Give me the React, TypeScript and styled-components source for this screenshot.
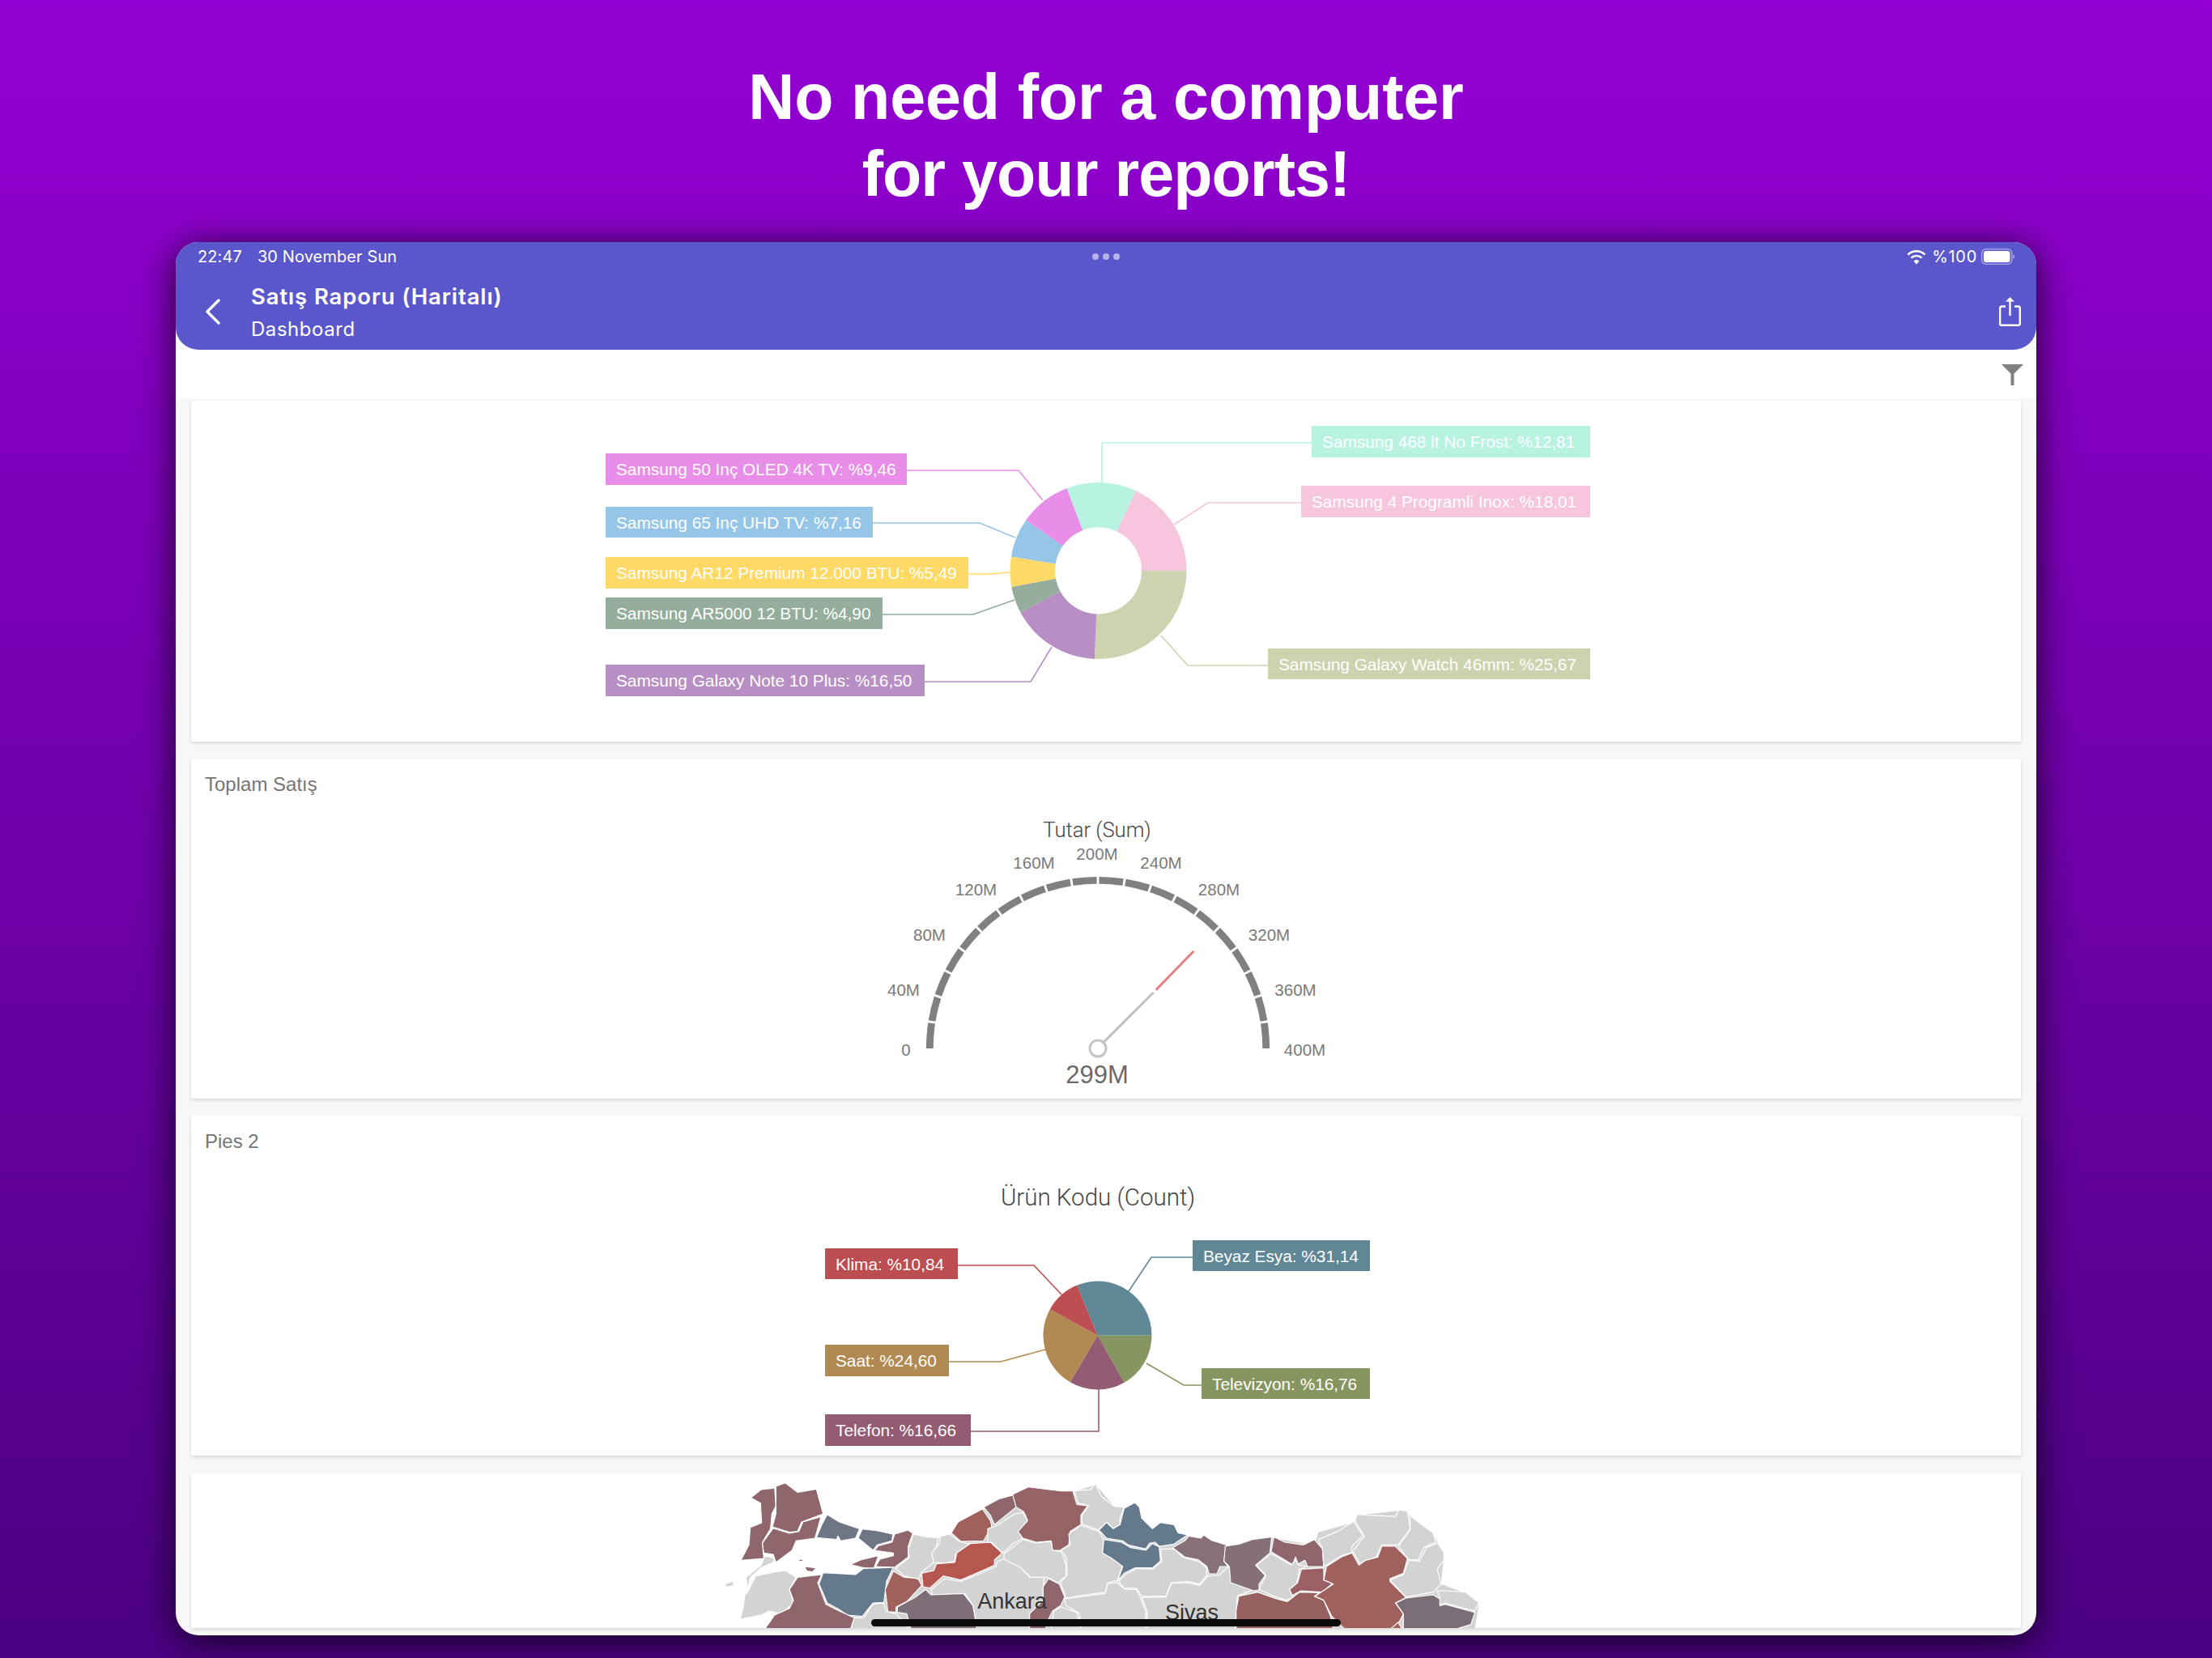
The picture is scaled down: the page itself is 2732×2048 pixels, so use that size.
import React from "react";
import styled, { createGlobalStyle } from "styled-components";

type Slice = {
  value: number;
  color: string;
};

type Callout = {
  text: string;
  color: string;
  x: number;
  y: number;
  width: number;
  height: number;
  line: string;
};

type Region = {
  fill: string;
  points: string;
};

const GlobalStyle = createGlobalStyle`
  html, body {
    margin: 0;
    padding: 0;
  }

  body {
    width: 2732px;
    height: 2048px;
    overflow: hidden;
    background: #4b0082;
  }
`;

const Page = styled.div`
  width: 2732px;
  height: 2048px;
  padding-top: 72px;
  box-sizing: border-box;
  display: flex;
  flex-direction: column;
  align-items: center;
  background: linear-gradient(180deg, #9400d3 0%, #4b0082 100%);
`;

const Headline = styled.h1`
  margin: 0 0 37px;
  font-family: "Liberation Sans", Arial, sans-serif;
  font-size: 79px;
  line-height: 95px;
  font-weight: 700;
  color: #fff;
  text-align: center;
`;

const HeadlineLine = styled.span<{ $tracking: number }>`
  display: block;
  letter-spacing: ${props => props.$tracking}px;
`;

const Tablet = styled.div`
  position: relative;
  width: 2298px;
  height: 1721px;
  border-radius: 28px;
  overflow: hidden;
  background: #f7f7f7;
  box-shadow: 0 6px 44px rgba(0, 0, 0, 0.8);
`;

const AppHeader = styled.header`
  height: 133px;
  box-sizing: border-box;
  padding: 0 19px 0 27px;
  background: #5a57cc;
  border-radius: 0 0 28px 28px;
  color: #fff;
  font-family: Inter, "Noto Sans", sans-serif;
`;

const StatusRow = styled.div`
  height: 36px;
  margin-right: 8px;
  display: grid;
  grid-template-columns: 1fr auto 1fr;
  align-items: center;
  font-size: 20px;
`;

const StatusLeft = styled.div`
  display: flex;
  gap: 19px;
  letter-spacing: 0.1px;
`;

const StatusRight = styled.div`
  display: flex;
  justify-content: flex-end;
  align-items: center;
  gap: 7px;
`;

const BatteryText = styled.span`
  letter-spacing: 0.7px;
  margin-right: -2px;
`;

const Dots = styled.div`
  display: flex;
  gap: 5px;
`;

const Dot = styled.span`
  width: 8px;
  height: 8px;
  border-radius: 50%;
  background: #b5b3ea;
`;

const NavRow = styled.div`
  display: flex;
  align-items: center;
  height: 85px;
  padding-top: 14px;
  box-sizing: border-box;
`;

const BackButton = styled.div`
  width: 57px;
  margin-left: 9px;
  display: flex;
  align-items: center;
`;

const NavTitles = styled.div`
  flex: 1;
  display: flex;
  flex-direction: column;
  gap: 12px;
  padding-top: 3px;
`;

const NavTitle = styled.div`
  font-size: 27.5px;
  line-height: 30px;
  font-weight: 600;
  letter-spacing: 0.88px;
`;

const NavSubtitle = styled.div`
  font-size: 24px;
  line-height: 28px;
  letter-spacing: 0.55px;
`;

const FilterBar = styled.div`
  height: 61px;
  box-sizing: border-box;
  padding: 18px 16px 0 0;
  display: flex;
  justify-content: flex-end;
  align-items: flex-start;
  background: #fff;
`;

const Content = styled.div`
  padding: 2px 19px 0;
  display: flex;
  flex-direction: column;
  gap: 21px;
`;

const Card = styled.section<{ $height: number }>`
  height: ${props => props.$height}px;
  display: flex;
  flex-direction: column;
  background: #fff;
  border-radius: 2px;
  overflow: hidden;
  box-shadow: 0 2px 4px rgba(0, 0, 0, 0.13);
`;

const CardTitle = styled.div`
  height: 53px;
  flex: none;
  box-sizing: border-box;
  padding: 13px 0 0 17px;
  font-family: "Liberation Sans", Arial, sans-serif;
  font-size: 24px;
  line-height: 38px;
  color: #757575;
`;

const ChartSvg = styled.svg`
  display: block;
  width: 2260px;
  flex: 1;
  min-height: 0;
`;

const CalloutText = styled.text`
  font-family: "Liberation Sans", Arial, sans-serif;
  font-size: 20.8px;
  fill: #fff;
  dominant-baseline: middle;
`;

const ChartTitle = styled.text<{ $size: number }>`
  font-family: Roboto, "Liberation Sans", sans-serif;
  font-weight: 300;
  font-size: ${props => props.$size}px;
  fill: #444;
  text-anchor: middle;
  dominant-baseline: middle;
`;

const TickLabel = styled.text`
  font-family: "Liberation Sans", Arial, sans-serif;
  font-size: 20.5px;
  fill: #7a7a7a;
  text-anchor: middle;
  dominant-baseline: middle;
`;

const GaugeValue = styled.text`
  font-family: "Liberation Sans", Arial, sans-serif;
  font-size: 31px;
  fill: #6a6a6a;
  text-anchor: middle;
  dominant-baseline: middle;
`;

const MapLabel = styled.text`
  font-family: "Liberation Sans", Arial, sans-serif;
  font-size: 27px;
  fill: #333;
  text-anchor: middle;
`;

const HomeBar = styled.div`
  position: absolute;
  left: 859px;
  bottom: 11px;
  width: 580px;
  height: 9px;
  border-radius: 5px;
  background: #0a0a0a;
`;

const polar = (cx: number, cy: number, r: number, deg: number) => {
  const rad = (deg * Math.PI) / 180;
  return [cx + r * Math.cos(rad), cy + r * Math.sin(rad)];
};

const slicePath = (cx: number, cy: number, r: number, inner: number, from: number, to: number) => {
  const [x1, y1] = polar(cx, cy, r, from);
  const [x2, y2] = polar(cx, cy, r, to);
  const large = to - from > 180 ? 1 : 0;
  if (inner === 0) {
    return `M${cx},${cy} L${x1},${y1} A${r},${r} 0 ${large} 1 ${x2},${y2} Z`;
  }
  const [x3, y3] = polar(cx, cy, inner, to);
  const [x4, y4] = polar(cx, cy, inner, from);
  return `M${x1},${y1} A${r},${r} 0 ${large} 1 ${x2},${y2} L${x3},${y3} A${inner},${inner} 0 ${large} 0 ${x4},${y4} Z`;
};

const Pie: React.FC<{ cx: number; cy: number; r: number; inner: number; slices: Slice[] }> = props => {
  let angle = 0;
  return (
    <>
      {props.slices.map(slice => {
        const from = angle;
        angle += slice.value * 3.6;
        return (
          <path
            key={slice.color}
            d={slicePath(props.cx, props.cy, props.r, props.inner, from, angle)}
            fill={slice.color}
          />
        );
      })}
    </>
  );
};

const Callouts: React.FC<{ items: Callout[] }> = props => (
  <>
    {props.items.map(item => (
      <g key={item.text}>
        <polyline points={item.line} fill="none" stroke={item.color} strokeWidth={1.6} />
        <rect x={item.x} y={item.y} width={item.width} height={item.height} fill={item.color} />
        <CalloutText x={item.x + 13} y={item.y + item.height / 2 + 2}>{item.text}</CalloutText>
      </g>
    ))}
  </>
);

const donutSlices: Slice[] = [
  { value: 25.67, color: "#cdd3ae" },
  { value: 16.5, color: "#b88fc5" },
  { value: 4.9, color: "#94ad9c" },
  { value: 5.49, color: "#ffd966" },
  { value: 7.16, color: "#95c6e8" },
  { value: 9.46, color: "#e88ee8" },
  { value: 12.81, color: "#b8f3e2" },
  { value: 18.01, color: "#f5c6de" },
];

const donutCallouts: Callout[] = [
  { text: "Samsung 50 Inç OLED 4K TV: %9,46", color: "#e88ee8", x: 748, y: 560, width: 372, height: 39, line: "1120,581 1258,581 1288,618" },
  { text: "Samsung 65 Inç UHD TV: %7,16", color: "#95c6e8", x: 748, y: 626, width: 330, height: 38, line: "1078,646 1210,646 1254,664" },
  { text: "Samsung AR12 Premium 12.000 BTU: %5,49", color: "#ffd966", x: 748, y: 688, width: 448, height: 39, line: "1196,709 1222,709 1247,707" },
  { text: "Samsung AR5000 12 BTU: %4,90", color: "#94ad9c", x: 748, y: 738, width: 342, height: 39, line: "1090,759 1202,759 1253,741" },
  { text: "Samsung Galaxy Note 10 Plus: %16,50", color: "#b88fc5", x: 748, y: 821, width: 394, height: 39, line: "1142,842 1273,842 1299,799" },
  { text: "Samsung 468 lt No Frost: %12,81", color: "#b8f3e2", x: 1620, y: 526, width: 344, height: 39, line: "1620,547 1361,547 1361,596" },
  { text: "Samsung 4 Programli Inox: %18,01", color: "#f5c6de", x: 1607, y: 600, width: 357, height: 39, line: "1607,621 1492,621 1450,648" },
  { text: "Samsung Galaxy Watch 46mm: %25,67", color: "#cdd3ae", x: 1566, y: 801, width: 398, height: 38, line: "1566,822 1467,822 1434,785" },
];

const pieSlices: Slice[] = [
  { value: 16.76, color: "#879661" },
  { value: 16.66, color: "#935c72" },
  { value: 24.6, color: "#b08a52" },
  { value: 10.84, color: "#bc4d50" },
  { value: 31.14, color: "#5f8796" },
];

const pieCallouts: Callout[] = [
  { text: "Klima: %10,84", color: "#bc4d50", x: 1019, y: 1542, width: 164, height: 38, line: "1183,1563 1277,1563 1311,1599" },
  { text: "Saat: %24,60", color: "#b08a52", x: 1019, y: 1661, width: 153, height: 39, line: "1172,1682 1236,1682 1291,1667" },
  { text: "Telefon: %16,66", color: "#935c72", x: 1019, y: 1747, width: 180, height: 39, line: "1199,1768 1357,1768 1357,1716" },
  { text: "Beyaz Esya: %31,14", color: "#5f8796", x: 1473, y: 1532, width: 219, height: 38, line: "1473,1553 1422,1553 1394,1595" },
  { text: "Televizyon: %16,76", color: "#879661", x: 1484, y: 1690, width: 208, height: 38, line: "1484,1711 1462,1711 1416,1684" },
];

const gaugeTicks = [
  { text: "0", x: 1119, y: 1299 },
  { text: "40M", x: 1116, y: 1225 },
  { text: "80M", x: 1148, y: 1157 },
  { text: "120M", x: 1205.5, y: 1101 },
  { text: "160M", x: 1277, y: 1068 },
  { text: "200M", x: 1355, y: 1057 },
  { text: "240M", x: 1434, y: 1068 },
  { text: "280M", x: 1505.5, y: 1101 },
  { text: "320M", x: 1567.5, y: 1157 },
  { text: "360M", x: 1600, y: 1225 },
  { text: "400M", x: 1611.5, y: 1299 },
];

const gaugeSegments = Array.from({ length: 20 }, (_, i) => {
  const from = 180 + i * 9 + (i === 0 ? 0 : 0.4);
  const to = 180 + (i + 1) * 9 - (i === 19 ? 0 : 0.4);
  const [x1, y1] = polar(1356, 1295, 207.7, from);
  const [x2, y2] = polar(1356, 1295, 207.7, to);
  return `M${x1},${y1} A207.7,207.7 0 0 1 ${x2},${y2}`;
});

const GREY = "#d3d3d3";
const MAUVE = "#8e666b";
const SLATE = "#6e7585";
const BLUE = "#65798c";
const RED = "#a0605c";
const BRIGHT = "#b5574e";
const PLUM = "#7e6e78";
const ROSE = "#956366";

// land behind the provinces so the thin gaps between them don't read as sea
const landBase: Region[] = [
  {
    fill: GREY,
    points:
      "640,348 648,228 712,224 805,240 850,228 880,185 970,135 1085,84 1140,55 1305,68 1390,42 1460,124 1495,128 1535,112 1560,168 1600,208 1630,186 1695,222 1730,231 1790,243 1875,268 1920,265 1970,248 2042,238 2200,268 2215,218 2345,182 2360,155 2515,138 2555,158 2640,223 2680,298 2670,410 2760,443 2810,483 2795,575 365,575 365,400 380,372 500,375 530,352",
  },
];

// west part of the map, in crop coordinates (origin 890,1820, 3x)
const westRegions: Region[] = [
  { fill: GREY, points: "90,450 100,440 130,380 200,365 240,360 280,385 255,430 270,480 225,520 180,510 150,525 72,540 85,490" },
  { fill: GREY, points: "165,305 200,315 195,330 150,350 110,385 100,430 95,385 150,340" },
  { fill: GREY, points: "15,410 45,400 50,415 20,422" },
  { fill: GREY, points: "490,535 530,535 565,485 605,480 612,510 650,520 700,575 485,575" },
  { fill: GREY, points: "780,430 830,390 890,400 960,372 1020,345 1025,325 1050,318 1100,330 1145,385 1200,372 1195,430 1195,470 1145,520 1150,575 950,575 935,490 905,445 785,450" },
  { fill: MAUVE, points: "112,90 150,60 195,55 200,52 205,120 190,150 185,205 155,255 160,315 75,322 105,265 110,200 152,183 148,110" },
  { fill: MAUVE, points: "205,48 240,35 285,70 355,58 380,150 300,180 285,215 255,218 192,198 205,150" },
  { fill: MAUVE, points: "195,203 255,222 290,215 305,180 372,160 350,240 280,250 265,285 205,330 195,300 160,295 155,258" },
  { fill: SLATE, points: "395,152 440,180 515,205 500,240 445,250 435,232 430,245 355,238 375,190" },
  { fill: SLATE, points: "525,206 580,212 638,225 635,250 580,265 565,285 510,240" },
  { fill: MAUVE, points: "645,225 695,210 712,222 695,270 695,310 645,348 575,345 590,318 640,305 640,295 570,285 585,268 635,255" },
  { fill: MAUVE, points: "480,338 520,320 585,305 568,352 530,350" },
  { fill: BLUE, points: "380,368 450,372 500,375 530,352 600,350 640,348 615,400 605,478 565,480 525,530 470,525 440,505 395,480 365,410" },
  { fill: RED, points: "640,362 680,385 730,388 745,415 690,475 650,495 650,515 620,512 610,430" },
  { fill: PLUM, points: "655,495 720,460 760,430 780,450 900,445 935,490 950,575 705,575 690,520 655,515" },
  { fill: MAUVE, points: "285,385 375,375 360,405 390,485 440,510 495,535 482,575 165,575 200,525 255,500 270,470 255,430" },
  { fill: MAUVE, points: "310,345 355,350 340,365 320,362" },
  { fill: MAUVE, points: "290,320 305,318 305,326 290,326" },
  { fill: GREY, points: "715,225 760,235 805,238 800,270 785,295 790,330 745,365 735,392 680,380 648,352 700,312 695,285" },
  { fill: GREY, points: "815,232 850,225 885,252 925,262 870,300 868,325 830,332 790,330 782,295 808,265" },
  { fill: RED, points: "855,220 880,180 970,132 1000,175 1005,195 975,250 890,252" },
  { fill: MAUVE, points: "975,125 1030,95 1085,80 1095,125 1015,190 1000,155" },
  { fill: BRIGHT, points: "745,370 790,360 800,335 868,330 875,295 925,260 1000,255 1043,295 1015,320 1015,340 960,365 890,395 825,380 775,425 750,420" },
];

// middle part of the map (origin 1220,1820, 3x)
const midRegions: Region[] = [
  { fill: GREY, points: "0,205 30,195 100,150 130,145 148,175 115,215 130,240 90,262 60,292 50,290 15,255 0,255" },
  { fill: ROSE, points: "92,78 150,50 270,65 315,65 330,115 370,120 345,155 345,190 305,215 300,265 268,285 240,285 235,250 180,255 130,240 112,215 148,175 133,142 105,125" },
  { fill: GREY, points: "320,65 380,60 400,38 420,85 470,122 505,125 490,165 490,190 465,205 440,180 412,210 350,188 348,155 375,120 335,110" },
  { fill: GREY, points: "60,298 130,245 175,258 235,252 240,285 272,290 290,340 290,380 260,405 220,385 160,385 115,345 60,318" },
  { fill: GREY, points: "300,225 345,192 410,215 430,245 425,295 460,315 500,340 480,398 445,405 435,440 360,450 290,462 270,405 295,375 290,310 272,285 305,265" },
  { fill: BLUE, points: "545,108 562,125 570,165 610,205 640,182 690,190 705,220 740,228 690,262 635,270 620,255 600,258 585,280 520,265 500,250 440,240 412,210 440,182 465,205 490,190 505,130" },
  { fill: BLUE, points: "430,245 495,255 530,275 585,285 610,260 635,272 640,325 610,350 545,350 505,370 482,398 500,345 460,315 425,295" },
  { fill: "#87707a", points: "745,232 790,240 800,228 830,248 885,265 875,325 890,345 860,345 850,372 820,372 812,345 780,320 730,310 685,275 730,250" },
  { fill: GREY, points: "640,280 690,280 725,312 780,325 810,350 812,378 785,410 740,400 680,405 660,455 570,455 550,425 505,425 485,400 510,375 550,352 610,355 645,325" },
  { fill: GREY, points: "570,460 660,458 680,408 740,405 785,415 815,380 855,378 893,345 905,395 960,410 1000,425 960,440 925,455 915,575 590,575 590,510" },
  { fill: GREY, points: "285,465 360,455 435,445 445,408 480,405 510,430 550,430 565,460 585,510 585,575 345,575 340,520 290,490" },
  { fill: GREY, points: "245,510 270,495 330,515 345,575 235,575" },
  { fill: MAUVE, points: "225,390 265,410 285,458 270,490 240,510 225,540 215,575 155,575 155,520 205,470 205,420" },
];

// east part of the map (origin 1520,1820, 3x)
const eastRegions: Region[] = [
  { fill: "#85707a", points: "-20,270 30,262 80,245 152,235 145,295 92,340 128,378 105,410 105,432 85,435 0,405 -5,345 -25,325" },
  { fill: MAUVE, points: "160,235 200,255 270,265 310,245 340,280 345,345 285,345 275,322 250,335 240,310 230,338 150,290" },
  { fill: GREY, points: "95,340 150,297 225,340 240,320 250,338 280,345 255,355 245,410 220,432 230,460 205,470 160,455 105,430 130,378" },
  { fill: "#9b6065", points: "262,355 345,350 345,395 380,405 340,440 260,435 228,452 218,430 248,405" },
  { fill: "#96605f", points: "30,455 100,440 170,465 210,475 255,440 330,442 310,455 345,470 370,530 380,575 20,575 20,510" },
  { fill: GREY, points: "325,245 395,215 455,178 490,230 450,270 445,295 410,305 345,345 340,280" },
  { fill: GREY, points: "460,175 470,152 520,155 610,160 625,135 655,140 665,205 620,265 560,265 540,310 480,335 452,290 495,232" },
  { fill: GREY, points: "665,155 700,185 750,220 760,255 715,275 695,320 660,320 622,270 665,210" },
  { fill: GREY, points: "700,325 725,275 768,258 790,295 790,320 765,355 780,410 750,440 650,458 590,395 640,375 660,322" },
  { fill: GREY, points: "765,435 800,435 870,440 920,480 905,508 860,498 795,480 770,490 775,460" },
  { fill: RED, points: "450,295 475,340 500,322 545,310 560,270 610,270 655,315 640,370 590,390 590,400 650,460 610,480 640,520 625,550 595,575 420,575 375,530 345,470 312,455 380,410 345,395 355,345 410,310" },
  { fill: "#7a6d78", points: "612,480 650,462 750,450 775,465 775,490 795,485 905,515 890,560 840,575 640,575 640,520" },
  { fill: RED, points: "595,575 620,552 635,575" },
];

const MapPart: React.FC<{ originX: number; regions: Region[]; outline?: boolean }> = props => (
  <g transform={`translate(${props.originX} 1820) scale(0.3333)`}>
    {props.regions.map(region => (
      <polygon
        key={region.points}
        points={region.points}
        fill={region.fill}
        stroke={props.outline ? "#fff" : "none"}
        strokeWidth={3.5}
        strokeLinejoin="round"
      />
    ))}
  </g>
);

const App: React.FC = () => {
  return (
    <Page>
      <GlobalStyle />
      <Headline>
        <HeadlineLine $tracking={-0.15}>No need for a computer</HeadlineLine>
        <HeadlineLine $tracking={-0.95}>for your reports!</HeadlineLine>
      </Headline>

      <Tablet>
        <AppHeader>
          <StatusRow>
            <StatusLeft>
              <span>22:47</span>
              <span>30 November Sun</span>
            </StatusLeft>
            <Dots>
              <Dot />
              <Dot />
              <Dot />
            </Dots>
            <StatusRight>
              <svg width="24" height="19" viewBox="0 0 24 19" fill="none" stroke="#fff" strokeWidth="2.6">
                <path d="M1.5 6.5 A15 15 0 0 1 22.5 6.5" />
                <path d="M5.5 10.5 A9.5 9.5 0 0 1 18.5 10.5" />
                <path d="M12 18.5 L8.6 14.4 A5 5 0 0 1 15.4 14.4 Z" fill="#fff" stroke="none" />
              </svg>
              <BatteryText>%100</BatteryText>
              <svg width="41" height="20" viewBox="0 0 41 20">
                <rect x="0.75" y="0.75" width="37" height="18.5" rx="5" fill="none" stroke="#fff" strokeOpacity="0.45" strokeWidth="1.5" />
                <rect x="3" y="3" width="32.5" height="14" rx="3" fill="#fff" />
                <path d="M39.5 7 A3.5 3.5 0 0 1 39.5 13 Z" fill="#fff" fillOpacity="0.5" />
              </svg>
            </StatusRight>
          </StatusRow>
          <NavRow>
            <BackButton>
              <svg width="20" height="32" viewBox="0 0 20 32" fill="none" stroke="#fff" strokeWidth="3.4" strokeLinecap="round" strokeLinejoin="round">
                <path d="M17 2 L3 16 L17 30" />
              </svg>
            </BackButton>
            <NavTitles>
              <NavTitle>Satış Raporu (Haritalı)</NavTitle>
              <NavSubtitle>Dashboard</NavSubtitle>
            </NavTitles>
            <svg width="27" height="37" viewBox="0 0 27 37" fill="none" stroke="#fff" strokeWidth="2.4" strokeLinejoin="round">
              <path d="M8 12.5 H3 A1.8 1.8 0 0 0 1.2 14.3 V34 A1.8 1.8 0 0 0 3 35.8 H24 A1.8 1.8 0 0 0 25.8 34 V14.3 A1.8 1.8 0 0 0 24 12.5 H19" />
              <path d="M13.5 24 V2" />
              <path d="M8 6.5 L13.5 1 L19 6.5" fill="#fff" stroke="none" />
            </svg>
          </NavRow>
        </AppHeader>

        <FilterBar>
          <svg width="27" height="26" viewBox="0 0 27 26" fill="#808080">
            <path d="M0 0 H27 L15.5 11.5 V26 H11.5 V11.5 Z" />
          </svg>
        </FilterBar>

        <Content>
          <Card $height={421}>
            <ChartSvg viewBox="236 495 2260 421">
              <Callouts items={donutCallouts} />
              <Pie cx={1356.5} cy={705} r={109} inner={53.5} slices={donutSlices} />
            </ChartSvg>
          </Card>

          <Card $height={420}>
            <CardTitle>Toplam Satış</CardTitle>
            <ChartSvg viewBox="236 990 2260 367">
              <ChartTitle $size={25.6} x={1355} y={1027.5}>Tutar (Sum)</ChartTitle>
              {gaugeTicks.map(tick => (
                <TickLabel key={tick.text} x={tick.x} y={tick.y}>{tick.text}</TickLabel>
              ))}
              {gaugeSegments.map(d => (
                <path key={d} d={d} fill="none" stroke="#808080" strokeWidth={8.8} />
              ))}
              <line x1={1362.5} y1={1288} x2={1424.6} y2={1226} stroke="#bfbfbf" strokeWidth={3} />
              <line x1={1427.7} y1={1222.7} x2={1474.4} y2={1174.7} stroke="#e57f7f" strokeWidth={3} />
              <circle cx={1356} cy={1295} r={10} fill="#fff" stroke="#c4c4c4" strokeWidth={3} />
              <GaugeValue x={1355} y={1329.5}>299M</GaugeValue>
            </ChartSvg>
          </Card>

          <Card $height={420}>
            <CardTitle>Pies 2</CardTitle>
            <ChartSvg viewBox="236 1431 2260 367">
              <ChartTitle $size={29.5} x={1356} y={1481}>Ürün Kodu (Count)</ChartTitle>
              <Callouts items={pieCallouts} />
              <Pie cx={1355.5} cy={1649.5} r={67} inner={0} slices={pieSlices} />
            </ChartSvg>
          </Card>

          <Card $height={192}>
            <ChartSvg viewBox="236 1819 2260 192">
              <MapPart originX={890} regions={landBase} />
              <MapPart originX={890} regions={westRegions} outline />
              <MapPart originX={1220} regions={midRegions} outline />
              <MapPart originX={1520} regions={eastRegions} outline />
              <MapLabel x={1250} y={1987}>Ankara</MapLabel>
              <MapLabel x={1472} y={2001}>Sivas</MapLabel>
            </ChartSvg>
          </Card>
        </Content>

        <HomeBar />
      </Tablet>
    </Page>
  );
};

export default App;
